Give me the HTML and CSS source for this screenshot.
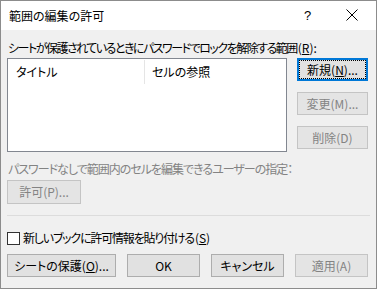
FILE: index.html
```html
<!DOCTYPE html>
<html lang="ja">
<head>
<meta charset="utf-8">
<link rel="stylesheet" href="styles.css">
</head>
<body>
<div class="window">
  <div class="titlebar">
    <span class="title">範囲の編集の許可</span>
    <span class="help">?</span>
    <svg class="close" width="12" height="12" viewBox="0 0 12 12"><path d="M0.5 0.5 L11.5 11.5 M11.5 0.5 L0.5 11.5" stroke="#000" stroke-width="1" fill="none"/></svg>
  </div>
  <div class="content">
    <div class="label1"><span class="tight">シートが保護されているときにパスワードでロックを解除する範囲</span>(<u>R</u>):</div>
    <div class="listrow">
      <div class="list">
        <div class="listhead">
          <div class="col c1">タイトル</div>
          <div class="col c2">セルの参照</div>
        </div>
      </div>
      <div class="sidebtns">
        <div class="btn side default"><span class="focus">新規(<u>N</u>)...</span></div>
        <div class="btn side disabled">変更(M)...</div>
        <div class="btn side disabled">削除(D)</div>
      </div>
    </div>
    <div class="label2">パスワードなしで範囲内のセルを編集できるユーザーの指定：</div>
    <div class="btn permit disabled">許可(P)...</div>
    <div class="sep"></div>
    <div class="checkrow">
      <span class="checkbox"></span>
      <span><span class="tight2">新しいブックに許可情報を貼り付ける</span>(<u>S</u>)</span>
    </div>
    <div class="bottom">
      <div class="btn wide">シートの保護(<u>O</u>)...</div>
      <div class="btn">OK</div>
      <div class="btn">キャンセル</div>
      <div class="btn disabled">適用(A)</div>
    </div>
  </div>
</div>
</body>
</html>
```
FILE: styles.css
```css
html, body {
  margin: 0;
  padding: 0;
}
body {
  width: 377px;
  height: 289px;
  overflow: hidden;
  font-family: "Noto Sans CJK JP", "Noto Sans", sans-serif;
  font-size: 12px;
  font-feature-settings: "palt";
  color: #000;
}
.window {
  box-sizing: border-box;
  width: 377px;
  height: 289px;
  border: 1px solid #8c8c8c;
  background: #f0f0f0;
  display: flex;
  flex-direction: column;
}
.titlebar {
  height: 29px;
  background: #fff;
  display: flex;
  align-items: center;
  padding-left: 8px;
}
.title {
  flex: 1;
  line-height: 16px;
}
.help {
  width: 8px;
  margin-right: 34px;
  font-family: "Liberation Sans", sans-serif;
  font-size: 13px;
}
.close {
  margin-right: 18px;
  margin-top: -2px;
}
.content {
  padding-left: 6px;
  display: flex;
  flex-direction: column;
}
u {
  text-decoration: underline;
  text-underline-offset: 1px;
}
.label1 {
  margin-top: 10px;
  line-height: 16px;
  margin-left: 1px;
}
.tight {
  letter-spacing: -1.5px;
  margin-right: 1px;
}
.tight2 {
  letter-spacing: -1.2px;
  margin-right: 1px;
}
.listrow {
  margin-top: 2px;
  display: flex;
  gap: 10px;
}
.list {
  box-sizing: border-box;
  width: 280px;
  height: 94px;
  background: #fff;
  border: 1px solid #828790;
}
.listhead {
  display: flex;
  height: 24px;
  margin-top: 1px;
}
.col {
  line-height: 24px;
}
.c1 {
  width: 128px;
  padding-left: 8px;
  border-right: 1px solid #e5e5e5;
}
.c2 {
  padding-left: 7px;
}
.sidebtns {
  display: flex;
  flex-direction: column;
  gap: 11px;
}
.btn {
  box-sizing: border-box;
  width: 73px;
  height: 23px;
  background: #e1e1e1;
  border: 1px solid #adadad;
  display: flex;
  align-items: center;
  justify-content: center;
  line-height: 16px;
}
.btn.side {
  width: 71px;
}
.btn.disabled {
  background: #e4e4e4;
  border-color: #c4c4c4;
  color: #838383;
}
.btn.default {
  border: 2px solid #0078d7;
  padding: 0;
}
.focus {
  box-sizing: border-box;
  width: 100%;
  height: 100%;
  border: 1px dotted #000;
  display: flex;
  align-items: center;
  justify-content: center;
}
.label2 {
  margin-top: 9px;
  line-height: 16px;
  color: #838383;
  margin-left: 1px;
  letter-spacing: -1px;
}
.btn.permit {
  margin-top: 3px;
  width: 74px;
  height: 24px;
}
.sep {
  margin-top: 11px;
  height: 1px;
  width: 363px;
  background: #dcdcdc;
}
.checkrow {
  margin-top: 14px;
  display: flex;
  align-items: center;
  line-height: 16px;
  gap: 3px;
}
.checkbox {
  box-sizing: border-box;
  width: 13px;
  height: 13px;
  background: #fff;
  border: 1px solid #333;
}
.bottom {
  margin-top: 8px;
  display: flex;
  gap: 11px;
}
.btn.wide {
  width: 109px;
}
```
